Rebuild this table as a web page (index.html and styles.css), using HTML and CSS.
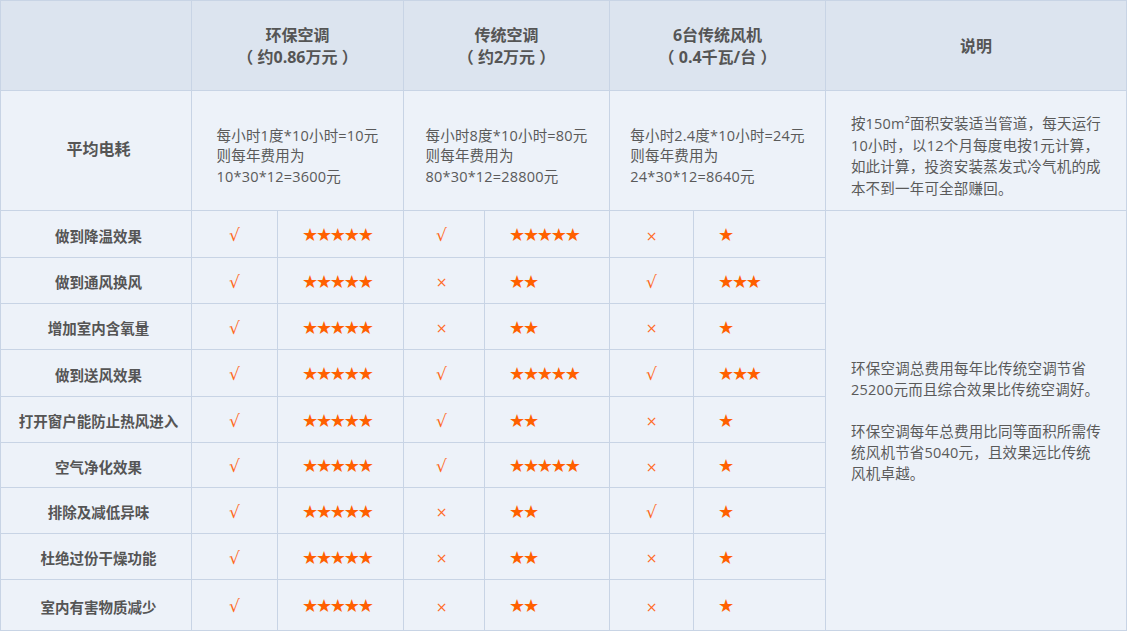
FILE: index.html
```html
<!DOCTYPE html>
<html lang="zh-CN">
<head>
<meta charset="utf-8">
<title>对比表</title>
<link rel="stylesheet" href="styles.css">
</head>
<body>
<div class="grid">
  <div class="cell head"></div>
  <div class="cell head span2">环保空调<br>（ 约0.86万元 ）</div>
  <div class="cell head span2">传统空调<br>（ 约2万元 ）</div>
  <div class="cell head span2">6台传统风机<br>（ 0.4千瓦/台 ）</div>
  <div class="cell head">说明</div>

  <div class="cell big label-lg">平均电耗</div>
  <div class="cell big span2"><div class="blk">每小时1度*10小时=10元<br>则每年费用为<br>10*30*12=3600元</div></div>
  <div class="cell big span2"><div class="blk">每小时8度*10小时=80元<br>则每年费用为<br>80*30*12=28800元</div></div>
  <div class="cell big span2"><div class="blk">每小时2.4度*10小时=24元<br>则每年费用为<br>24*30*12=8640元</div></div>
  <div class="cell big bigr"><div class="blk note">按150m²面积安装适当管道，每天运行<br>10小时，以12个月每度电按1元计算，<br>如此计算，投资安装蒸发式冷气机的成<br>本不到一年可全部赚回。</div></div>

  <div class="cell label">做到降温效果</div>
  <div class="cell mark">√</div><div class="cell stars">★★★★★</div>
  <div class="cell mark m2">√</div><div class="cell stars">★★★★★</div>
  <div class="cell mark x">×</div><div class="cell stars">★</div>
  <div class="cell summary"><div class="blk note">环保空调总费用每年比传统空调节省<br>25200元而且综合效果比传统空调好。<br><br>环保空调每年总费用比同等面积所需传<br>统风机节省5040元，且效果远比传统<br>风机卓越。</div></div>

  <div class="cell label">做到通风换风</div>
  <div class="cell mark">√</div><div class="cell stars">★★★★★</div>
  <div class="cell mark m2 x">×</div><div class="cell stars">★★</div>
  <div class="cell mark">√</div><div class="cell stars">★★★</div>

  <div class="cell label">增加室内含氧量</div>
  <div class="cell mark">√</div><div class="cell stars">★★★★★</div>
  <div class="cell mark m2 x">×</div><div class="cell stars">★★</div>
  <div class="cell mark x">×</div><div class="cell stars">★</div>

  <div class="cell label">做到送风效果</div>
  <div class="cell mark">√</div><div class="cell stars">★★★★★</div>
  <div class="cell mark m2">√</div><div class="cell stars">★★★★★</div>
  <div class="cell mark">√</div><div class="cell stars">★★★</div>

  <div class="cell label">打开窗户能防止热风进入</div>
  <div class="cell mark">√</div><div class="cell stars">★★★★★</div>
  <div class="cell mark m2">√</div><div class="cell stars">★★</div>
  <div class="cell mark x">×</div><div class="cell stars">★</div>

  <div class="cell label">空气净化效果</div>
  <div class="cell mark">√</div><div class="cell stars">★★★★★</div>
  <div class="cell mark m2">√</div><div class="cell stars">★★★★★</div>
  <div class="cell mark x">×</div><div class="cell stars">★</div>

  <div class="cell label">排除及减低异味</div>
  <div class="cell mark">√</div><div class="cell stars">★★★★★</div>
  <div class="cell mark m2 x">×</div><div class="cell stars">★★</div>
  <div class="cell mark">√</div><div class="cell stars">★</div>

  <div class="cell label">杜绝过份干燥功能</div>
  <div class="cell mark">√</div><div class="cell stars">★★★★★</div>
  <div class="cell mark m2 x">×</div><div class="cell stars">★★</div>
  <div class="cell mark x">×</div><div class="cell stars">★</div>

  <div class="cell label">室内有害物质减少</div>
  <div class="cell mark">√</div><div class="cell stars">★★★★★</div>
  <div class="cell mark m2 x">×</div><div class="cell stars">★★</div>
  <div class="cell mark x">×</div><div class="cell stars">★</div>
</div>
</body>
</html>
```

FILE: styles.css
```css
* { box-sizing: border-box; }
html, body { margin: 0; padding: 0; background: #edf2f9; }
body {
  font-family: "Open Sans", "Noto Sans CJK SC", sans-serif;
  color: #555;
  width: 1127px;
  height: 631px;
  overflow: hidden;
}
.grid {
  display: grid;
  grid-template-columns: 190px 85px 125px 80px 124px 83px 131px 300px;
  grid-template-rows: 89px 119px 46px 45px 45px 46px 45px 44px 45px 45px 50px;
  gap: 1px;
  padding: 1px;
  background: #c8d4e5;
  width: 1127px;
  height: 631px;
}
.cell {
  background: #edf2f9;
  display: flex;
  align-items: center;
  justify-content: center;
  font-size: 14px;
}
.span2 { grid-column: span 2; }
.head {
  background: #dce4ef;
  font-size: 16px;
  font-weight: bold;
  line-height: 22px;
  text-align: center;
  color: #555;
  padding-bottom: 0;
}
.big { padding-top: 12px; }
.bigr { padding-top: 11px; }
.blk {
  text-align: left;
  line-height: 20.5px;
  font-size: 14.5px;
  letter-spacing: 0.2px;
  color: #5a5a5a;
}
.note { line-height: 21.5px; }
.label-lg {
  font-family: "Noto Sans CJK SC", sans-serif;
  font-size: 16px;
  font-weight: bold;
  padding-left: 5px;
  padding-top: 0;
  padding-bottom: 6px;
}
.label {
  font-family: "Noto Sans CJK SC", sans-serif;
  font-weight: bold;
  font-size: 14.5px;
  padding-top: 2px;
  padding-left: 5px;
}
.mark {
  font-family: "DejaVu Sans", sans-serif;
  color: #ff6a1f;
  font-size: 17px;
  padding-top: 2px;
}
.mark.x { font-size: 14px; padding-top: 3px; }
.m2 { padding-right: 5px; }
.stars {
  font-family: "DejaVu Sans", sans-serif;
  color: #ff6000;
  font-size: 18px;
  justify-content: flex-start;
  padding-left: 24px;
  padding-top: 1px;
  letter-spacing: -2.2px;
}
.summary {
  grid-column: 8;
  grid-row: 3 / span 9;
  padding-top: 0;
}
.summary .note { line-height: 21px; }
```
